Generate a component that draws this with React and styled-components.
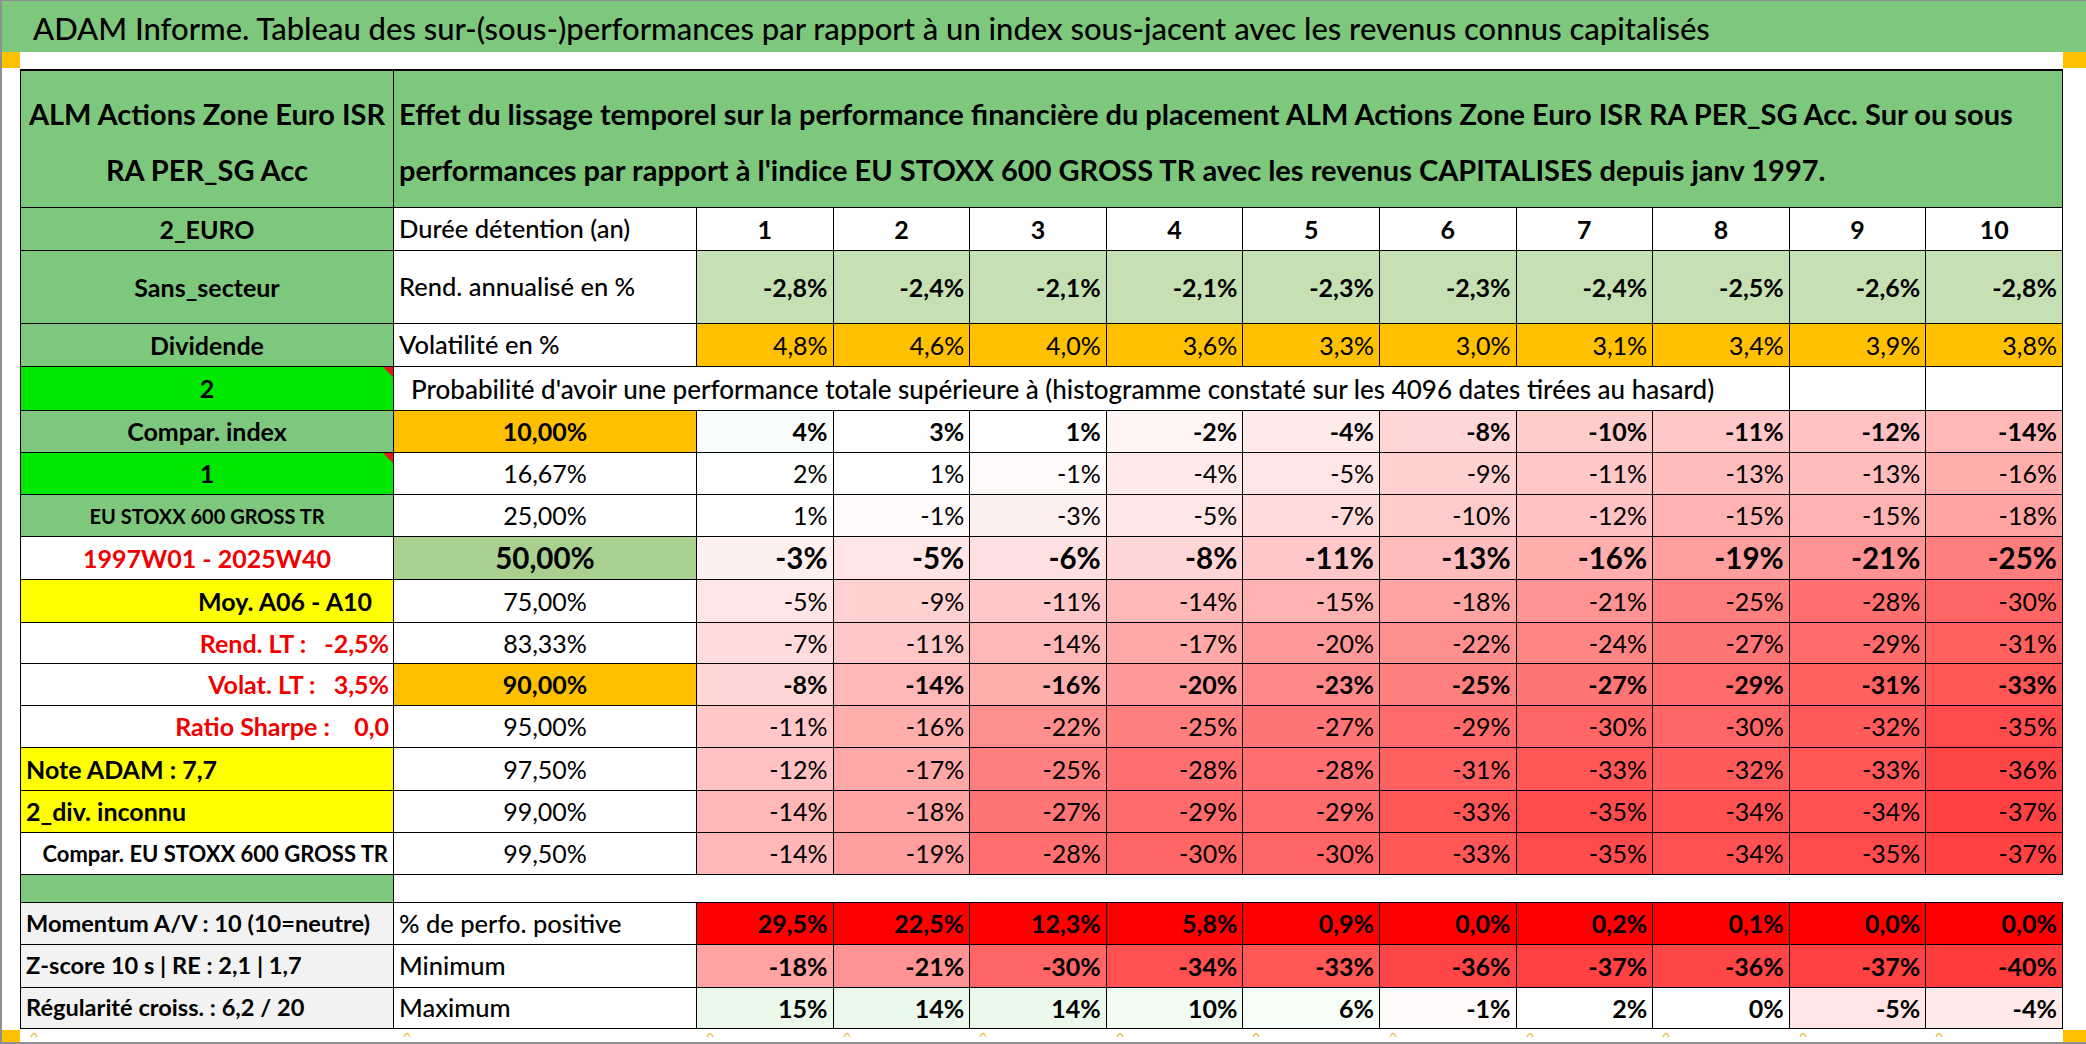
import React from "react";
import styled, { createGlobalStyle, css } from "styled-components";

const FONT = `Lato, "Open Sans", "Liberation Sans", sans-serif`;
const HEAD_GREEN = "#7ec87e";
const LIME = "#00e800";
const ORANGE = "#ffc000";
const YELLOW = "#ffff00";
const SOFT_GREEN = "#c6e0b4";
const MID_GREEN = "#a9d08e";
const LIGHT_GRAY = "#f2f2f2";
const RED_TEXT = "#f00000";

const GlobalStyle = createGlobalStyle`
  html, body { margin: 0; padding: 0; background: #fff; }
  * { box-sizing: border-box; }
`;

const Frame = styled.div`
  width: 2086px;
  height: 1044px;
  border-top: 1px solid #8f8f8f;
  border-left: 2px solid #8f8f8f;
  border-bottom: 2px solid #8f8f8f;
  display: flex;
  flex-direction: column;
  font-family: ${FONT};
  color: #000;
  overflow: hidden;
`;

const TitleBar = styled.div`
  height: 51px;
  flex: none;
  background: ${HEAD_GREEN};
  display: flex;
  align-items: center;
  padding: 3px 0 0 31px;
  font-size: 31px;
  font-weight: 500;
  white-space: nowrap;
`;

const MarkerRow = styled.div`
  height: ${p => p.$h}px;
  flex: none;
  display: flex;
  justify-content: space-between;
  align-items: ${p => p.$align || "flex-start"};
`;

const Marker = styled.div`
  width: ${p => p.$w}px;
  height: ${p => p.$h}px;
  background: ${ORANGE};
`;

const COLS = "373px 303px repeat(10, 136.6px)";

const Sheet = styled.div`
  margin-left: 18px;
  width: 2043px;
  flex: none;
  display: grid;
  grid-template-columns: ${COLS};
  grid-template-rows: 137px 43px 73px 43px 44px 42px 42px 42px 43px 43px 41px 42px 42px 43px 42px 42px 28px 42px 43px 41px;
  border-top: 2px solid #000;
  border-left: 1px solid #000;
`;

const Row = styled.div`
  display: contents;
  ${p => p.$thick && css`
    & > * { border-bottom: 3px solid #000; }
  `}
`;

const Cell = styled.div`
  position: relative;
  display: flex;
  align-items: center;
  min-width: 0;
  padding: 0 5px;
  background: ${p => p.$bg || "#fff"};
  border-right: 1px solid #000;
  border-bottom: 1px solid #000;
  font-size: ${p => p.$size || 25}px;
  font-weight: ${p => (p.$bold ? 700 : 400)};
  color: ${p => p.$color || "#000"};
  white-space: pre;
  line-height: 1;
`;

const HeadCell = styled(Cell)`
  grid-column: span ${p => p.$span || 1};
  background: ${HEAD_GREEN};
  font-size: 29px;
  font-weight: 700;
  line-height: 56px;
  justify-content: ${p => (p.$center ? "center" : "flex-start")};
  text-align: ${p => (p.$center ? "center" : "left")};
  padding-top: 5px;
`;

const SideCell = styled(Cell)`
  justify-content: ${p =>
    p.$align === "left" ? "flex-start" : p.$align === "right" ? "flex-end" : "center"};
  font-weight: 700;
  padding-right: ${p => (p.$pr != null ? p.$pr : 5)}px;
`;

const CommentMark = styled.span`
  position: absolute;
  top: 0;
  right: 0;
  width: 0;
  height: 0;
  border-left: 10px solid transparent;
  border-top: 10px solid #e8141b;
`;

const NameCell = styled(Cell)`
  justify-content: flex-start;
  font-size: 25.5px;
  font-weight: 500;
`;

const ProbTitle = styled(Cell)`
  grid-column: span 9;
  justify-content: flex-start;
  padding-left: 17px;
  font-size: 26px;
  font-weight: 500;
`;

const YearHead = styled(Cell)`
  justify-content: center;
  font-weight: 700;
`;

const PctCell = styled(Cell)`
  justify-content: center;
`;

const Value = styled(Cell)`
  justify-content: flex-end;
`;

const Spacer = styled.div`
  grid-column: span 11;
  border-bottom: 1px solid #000;
`;

const BottomStrip = styled.div`
  height: 15px;
  flex: none;
  display: flex;
  align-items: flex-end;
`;

const CaretGrid = styled.div`
  width: 2043px;
  height: 15px;
  display: grid;
  grid-template-columns: ${COLS};
`;

const Caret = styled.svg`
  margin: 2px 0 0 10px;
  display: block;
`;

const mix = (a, b, t) =>
  `rgb(${a.map((x, i) => Math.round(x + (b[i] - x) * t)).join(",")})`;
const WHITE = [255, 255, 255];
const HEAT_RED = [255, 60, 60];
const HEAT_GREEN = [234, 249, 234];
const heat = v =>
  v >= 0 ? mix(WHITE, HEAT_GREEN, Math.min(1, v / 15)) : mix(WHITE, HEAT_RED, Math.min(1, -v / 38));

const years = [1, 2, 3, 4, 5, 6, 7, 8, 9, 10];
const rend = ["-2,8%", "-2,4%", "-2,1%", "-2,1%", "-2,3%", "-2,3%", "-2,4%", "-2,5%", "-2,6%", "-2,8%"];
const vol = ["4,8%", "4,6%", "4,0%", "3,6%", "3,3%", "3,0%", "3,1%", "3,4%", "3,9%", "3,8%"];
const positive = ["29,5%", "22,5%", "12,3%", "5,8%", "0,9%", "0,0%", "0,2%", "0,1%", "0,0%", "0,0%"];
const minimum = [-18, -21, -30, -34, -33, -36, -37, -36, -37, -40];
const maximum = [15, 14, 14, 10, 6, -1, 2, 0, -5, -4];

const probRows = [
  {
    side: <SideCell $bg={HEAD_GREEN}>Compar. index</SideCell>,
    pct: "10,00%", bold: true, pctBg: ORANGE,
    vals: [4, 3, 1, -2, -4, -8, -10, -11, -12, -14],
  },
  {
    side: <SideCell $bg={LIME}>1<CommentMark /></SideCell>,
    pct: "16,67%",
    vals: [2, 1, -1, -4, -5, -9, -11, -13, -13, -16],
  },
  {
    side: <SideCell $bg={HEAD_GREEN} $size={20}>EU STOXX 600 GROSS TR</SideCell>,
    pct: "25,00%",
    vals: [1, -1, -3, -5, -7, -10, -12, -15, -15, -18],
  },
  {
    side: <SideCell $color={RED_TEXT}>1997W01 - 2025W40</SideCell>,
    pct: "50,00%", bold: true, big: true, pctBg: MID_GREEN,
    vals: [-3, -5, -6, -8, -11, -13, -16, -19, -21, -25],
  },
  {
    side: <SideCell $bg={YELLOW} $align="right" $pr={21}>Moy. A06 - A10</SideCell>,
    pct: "75,00%",
    vals: [-5, -9, -11, -14, -15, -18, -21, -25, -28, -30],
  },
  {
    side: <SideCell $color={RED_TEXT} $align="right" $pr={4}>{"Rend. LT :   -2,5%"}</SideCell>,
    pct: "83,33%",
    vals: [-7, -11, -14, -17, -20, -22, -24, -27, -29, -31],
  },
  {
    side: <SideCell $color={RED_TEXT} $align="right" $pr={4}>{"Volat. LT :   3,5%"}</SideCell>,
    pct: "90,00%", bold: true, pctBg: ORANGE,
    vals: [-8, -14, -16, -20, -23, -25, -27, -29, -31, -33],
  },
  {
    side: <SideCell $color={RED_TEXT} $align="right" $pr={4}>{"Ratio Sharpe :    0,0"}</SideCell>,
    pct: "95,00%", thick: true,
    vals: [-11, -16, -22, -25, -27, -29, -30, -30, -32, -35],
  },
  {
    side: <SideCell $bg={YELLOW} $align="left">Note ADAM : 7,7</SideCell>,
    pct: "97,50%",
    vals: [-12, -17, -25, -28, -28, -31, -33, -32, -33, -36],
  },
  {
    side: <SideCell $bg={YELLOW} $align="left">2_div. inconnu</SideCell>,
    pct: "99,00%",
    vals: [-14, -18, -27, -29, -29, -33, -35, -34, -34, -37],
  },
  {
    side: <SideCell $align="right" $pr={5} $size={22}>Compar. EU STOXX 600 GROSS TR</SideCell>,
    pct: "99,50%",
    vals: [-14, -19, -28, -30, -30, -33, -35, -34, -35, -37],
  },
];

export default function App() {
  return (
    <>
      <GlobalStyle />
      <Frame>
        <TitleBar>
          ADAM Informe. Tableau des sur-(sous-)performances par rapport à un index sous-jacent avec les revenus connus capitalisés
        </TitleBar>
        <MarkerRow $h={17}>
          <Marker $w={18} $h={16} />
          <Marker $w={23} $h={16} />
        </MarkerRow>

        <Sheet>
          <Row>
            <HeadCell $center>
              <div>ALM Actions Zone Euro ISR<br />RA PER_SG Acc</div>
            </HeadCell>
            <HeadCell $span={11}>
              <div>
                Effet du lissage temporel sur la performance financière du placement ALM Actions Zone Euro ISR RA PER_SG Acc. Sur ou sous
                <br />
                performances par rapport à l'indice EU STOXX 600 GROSS TR avec les revenus CAPITALISES depuis janv 1997.
              </div>
            </HeadCell>
          </Row>

          <Row>
            <SideCell $bg={HEAD_GREEN}>2_EURO</SideCell>
            <NameCell>Durée détention (an)</NameCell>
            {years.map(y => <YearHead key={y}>{y}</YearHead>)}
          </Row>

          <Row>
            <SideCell $bg={HEAD_GREEN}>Sans_secteur</SideCell>
            <NameCell>Rend. annualisé en %</NameCell>
            {rend.map((v, i) => <Value key={i} $bold $bg={SOFT_GREEN}>{v}</Value>)}
          </Row>

          <Row>
            <SideCell $bg={HEAD_GREEN}>Dividende</SideCell>
            <NameCell>Volatilité en %</NameCell>
            {vol.map((v, i) => <Value key={i} $bg={ORANGE}>{v}</Value>)}
          </Row>

          <Row>
            <SideCell $bg={LIME}>2<CommentMark /></SideCell>
            <ProbTitle>
              Probabilité d'avoir une performance totale supérieure à (histogramme constaté sur les 4096 dates tirées au hasard)
            </ProbTitle>
            <Cell />
            <Cell />
          </Row>

          {probRows.map(r => (
            <Row key={r.pct} $thick={r.thick}>
              {r.side}
              <PctCell $bold={r.bold} $bg={r.pctBg} $size={r.big ? 29.5 : 25}>{r.pct}</PctCell>
              {r.vals.map((v, i) => (
                <Value key={i} $bold={r.bold} $size={r.big ? 29.5 : 25} $bg={heat(v)}>{`${v}%`}</Value>
              ))}
            </Row>
          ))}

          <Row>
            <SideCell $bg={HEAD_GREEN} />
            <Spacer />
          </Row>

          <Row>
            <SideCell $bg={LIGHT_GRAY} $align="left" $size={23.6}>Momentum A/V : 10 (10=neutre)</SideCell>
            <NameCell>% de perfo. positive</NameCell>
            {positive.map((v, i) => <Value key={i} $bold $bg="#ff0000">{v}</Value>)}
          </Row>

          <Row>
            <SideCell $bg={LIGHT_GRAY} $align="left" $size={23.6}>Z-score 10 s | RE : 2,1 | 1,7</SideCell>
            <NameCell>Minimum</NameCell>
            {minimum.map((v, i) => <Value key={i} $bold $bg={heat(v)}>{`${v}%`}</Value>)}
          </Row>

          <Row>
            <SideCell $bg={LIGHT_GRAY} $align="left" $size={23.6}>Régularité croiss. : 6,2 / 20</SideCell>
            <NameCell>Maximum</NameCell>
            {maximum.map((v, i) => <Value key={i} $bold $bg={heat(v)}>{`${v}%`}</Value>)}
          </Row>
        </Sheet>

        <BottomStrip>
          <Marker $w={18} $h={14} />
          <CaretGrid>
            {Array.from({ length: 12 }, (_, i) => (
              <Caret key={i} width="8" height="6" viewBox="0 0 8 6">
                <path d="M1 6 Q4 -1 7 6" fill="none" stroke="#e8c45a" strokeWidth="1.4" />
              </Caret>
            ))}
          </CaretGrid>
          <Marker $w={23} $h={14} />
        </BottomStrip>
      </Frame>
    </>
  );
}
